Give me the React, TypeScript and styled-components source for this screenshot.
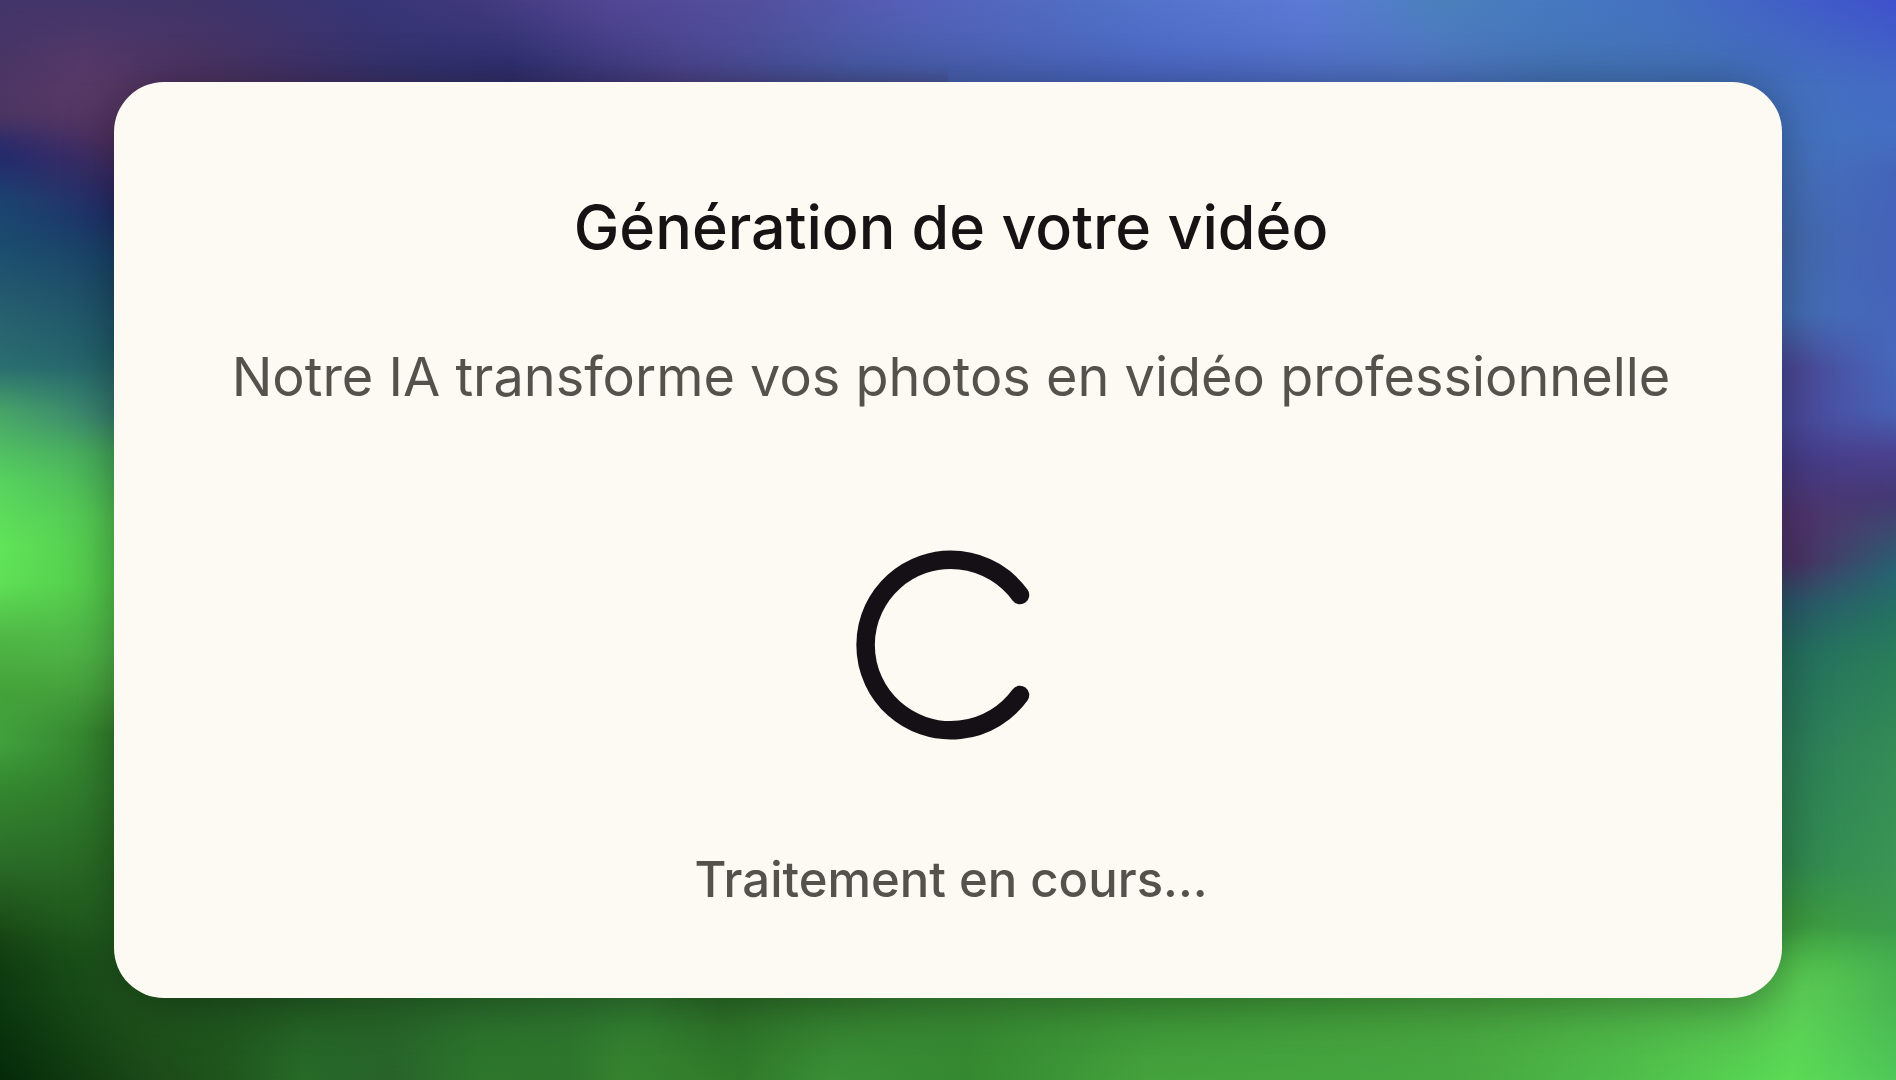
import React from "react";
import styled, { createGlobalStyle } from "styled-components";

const GlobalStyle = createGlobalStyle`
  *, *::before, *::after { box-sizing: border-box; }
  body {
    margin: 0;
    background: #2f7a2c;
    font-family: Inter, "Liberation Sans", sans-serif;
    -webkit-font-smoothing: antialiased;
  }
`;

type Band = { direction: string; stops: string; mask: string };

/* The wallpaper is a stack of colour bands: each side of the window has an
   inner band and an outer one that fades into it. */
const bands: Band[] = [
  {
    direction: "180deg",
    mask: "linear-gradient(90deg, #000 50%, transparent 50%)",
    stops:
      "#453468 0%, #543760 9%, #4f3060 13%, #2f2a66 17.5%, #20306a 20%, #1a4468 24%, #22606a 33%, #388070 38.5%, #45a85c 42%, #52c452 48%, #52c84a 54%, #4fb548 60.5%, #46a03c 64%, #33802c 68%, #2f7a2c 73%, #286a24 80%, #236020 86%, #1f551c 93%, #1f561c 100%",
  },
  {
    direction: "180deg",
    mask: "linear-gradient(90deg, #000, transparent 6%)",
    stops:
      "#43356a 0%, #50376a 6.5%, #4a3560 10.5%, #2b2b6c 13%, #222c6c 15%, #1c4370 18.5%, #1a4c6e 22.5%, #275f6e 29%, #2a6e70 34%, #47a368 38%, #57d25f 44.5%, #60e458 50.5%, #5ee056 54%, #4fb845 59%, #44a23a 64%, #40a03c 69%, #34882f 73%, #2a6b28 80%, #1a4a15 86%, #0d3a10 92.5%, #042a08 100%",
  },
  {
    direction: "180deg",
    mask: "linear-gradient(270deg, #000 50%, transparent 50%)",
    stops:
      "#446cc4 0%, #4474c0 12.5%, #456bb0 22%, #446eb4 29%, #4b4a98 34%, #4a4a9c 39%, #463c86 43%, #50346c 48%, #4a3468 52%, #2a5a6a 56%, #25705f 60.5%, #2d8058 70%, #318a50 80%, #3c9a40 85%, #52c84c 92.5%, #5bdb55 97%, #5bdb55 100%",
  },
  {
    direction: "180deg",
    mask: "linear-gradient(270deg, #000, transparent 5%)",
    stops:
      "#3f50cc 0%, #4465c6 6.5%, #4470c2 12%, #4464ba 16%, #4562ba 25.5%, #4668bc 33%, #4762b4 38%, #4a4290 42%, #443874 46%, #3c4a70 49%, #256470 53%, #24745f 57.5%, #2b8058 62%, #358c55 70%, #3a9554 80%, #3c9c4c 86%, #48b550 92.5%, #50c858 100%",
  },
  {
    direction: "90deg",
    mask: "linear-gradient(180deg, #000 6%, transparent 14%)",
    stops:
      "#4c3664 0%, #5b3a68 4.5%, #4c3362 12%, #30306c 22%, #2a2c6c 27%, #4a448c 36%, #445aa2 45%, #4860b0 52%, #4b66c4 61%, #5274c6 75%, #4474b4 82%, #4474b8 90%, #446cc4 100%",
  },
  {
    direction: "90deg",
    mask: "linear-gradient(180deg, #000, transparent 8%)",
    stops:
      "#43356a 0%, #403468 10%, #373575 19%, #40397c 25%, #524693 32%, #52509e 40%, #5560b8 48%, #5070c5 58%, #5c7ad6 69%, #4a80bb 76%, #4678c0 82%, #4470c0 88%, #3f50cc 100%",
  },
  {
    direction: "90deg",
    mask: "linear-gradient(0deg, #000 8%, transparent 14%)",
    stops:
      "#0d3a10 0%, #1f551c 7%, #215820 12%, #2a6e2c 24%, #307c32 34%, #2c6e28 38%, #378632 48%, #3e9838 64%, #4aa840 80%, #54bc4e 92%, #5acc54 95%, #48b550 100%",
  },
  {
    direction: "90deg",
    mask: "linear-gradient(0deg, #000, transparent 8%)",
    stops:
      "#042a08 0%, #1c4a18 8%, #1f561c 12%, #266a28 16%, #27632a 20.5%, #2d762c 25.5%, #2e742c 30%, #35842e 33%, #2f7a2a 39%, #3a9036 44%, #348830 51%, #44a23c 60.5%, #46a640 76.5%, #4ebe4a 86%, #5bdb55 94.5%, #50c85a 100%",
  },
];

const Page = styled.div`
  display: grid;
  grid-template: minmax(100vh, auto) / minmax(0, 1fr);
`;

const Wallpaper = styled.div`
  grid-area: 1 / 1;
  display: grid;
`;

const ColourBand = styled.div<{ $band: Band }>`
  grid-area: 1 / 1;
  background: linear-gradient(${(p) => p.$band.direction}, ${(p) => p.$band.stops});
  mask-image: ${(p) => p.$band.mask};
`;

const Stage = styled.main`
  grid-area: 1 / 1;
  z-index: 1;
  display: flex;
  padding: 82px 6%;
`;

const Card = styled.section`
  flex: 1;
  display: flex;
  flex-direction: column;
  align-items: center;
  justify-content: center;
  padding: 105px 42px 86px 48px;
  border-radius: 50px;
  background: #fdfaf3;
  box-shadow: 0 4px 48px rgba(0, 0, 0, 0.35);
  text-align: center;
`;

const Heading = styled.header`
  display: flex;
  flex-direction: column;
  gap: 74px;
`;

const Title = styled.h1`
  margin: 0;
  color: #171314;
  font-size: 61px;
  font-weight: 500;
  line-height: 80px;
`;

const Subtitle = styled.p`
  margin: 0;
  color: #55514d;
  font-size: 54px;
  font-weight: 400;
  line-height: 72px;
`;

const Spinner = styled.svg`
  display: block;
  width: 192px;
  height: 192px;
  margin: 136px 0 107px;
`;

const Status = styled.p`
  margin: 0;
  color: #55514d;
  font-size: 49px;
  font-weight: 500;
  line-height: 64px;
`;

export default function App() {
  return (
    <>
      <GlobalStyle />
      <Page>
        <Wallpaper aria-hidden="true">
          {bands.map((band, i) => (
            <ColourBand key={i} $band={band} />
          ))}
        </Wallpaper>
        <Stage>
          <Card aria-busy="true">
            <Heading>
              <Title>Génération de votre vidéo</Title>
              <Subtitle>Notre IA transforme vos photos en vidéo professionnelle</Subtitle>
            </Heading>
            <Spinner viewBox="0 0 192 192" fill="none" aria-hidden="true">
              <path
                d="M165 46 A85.3 85.3 0 1 0 165 146"
                stroke="#150f16"
                strokeWidth="18.5"
                strokeLinecap="round"
              />
            </Spinner>
            <Status role="status">Traitement en cours...</Status>
          </Card>
        </Stage>
      </Page>
    </>
  );
}
